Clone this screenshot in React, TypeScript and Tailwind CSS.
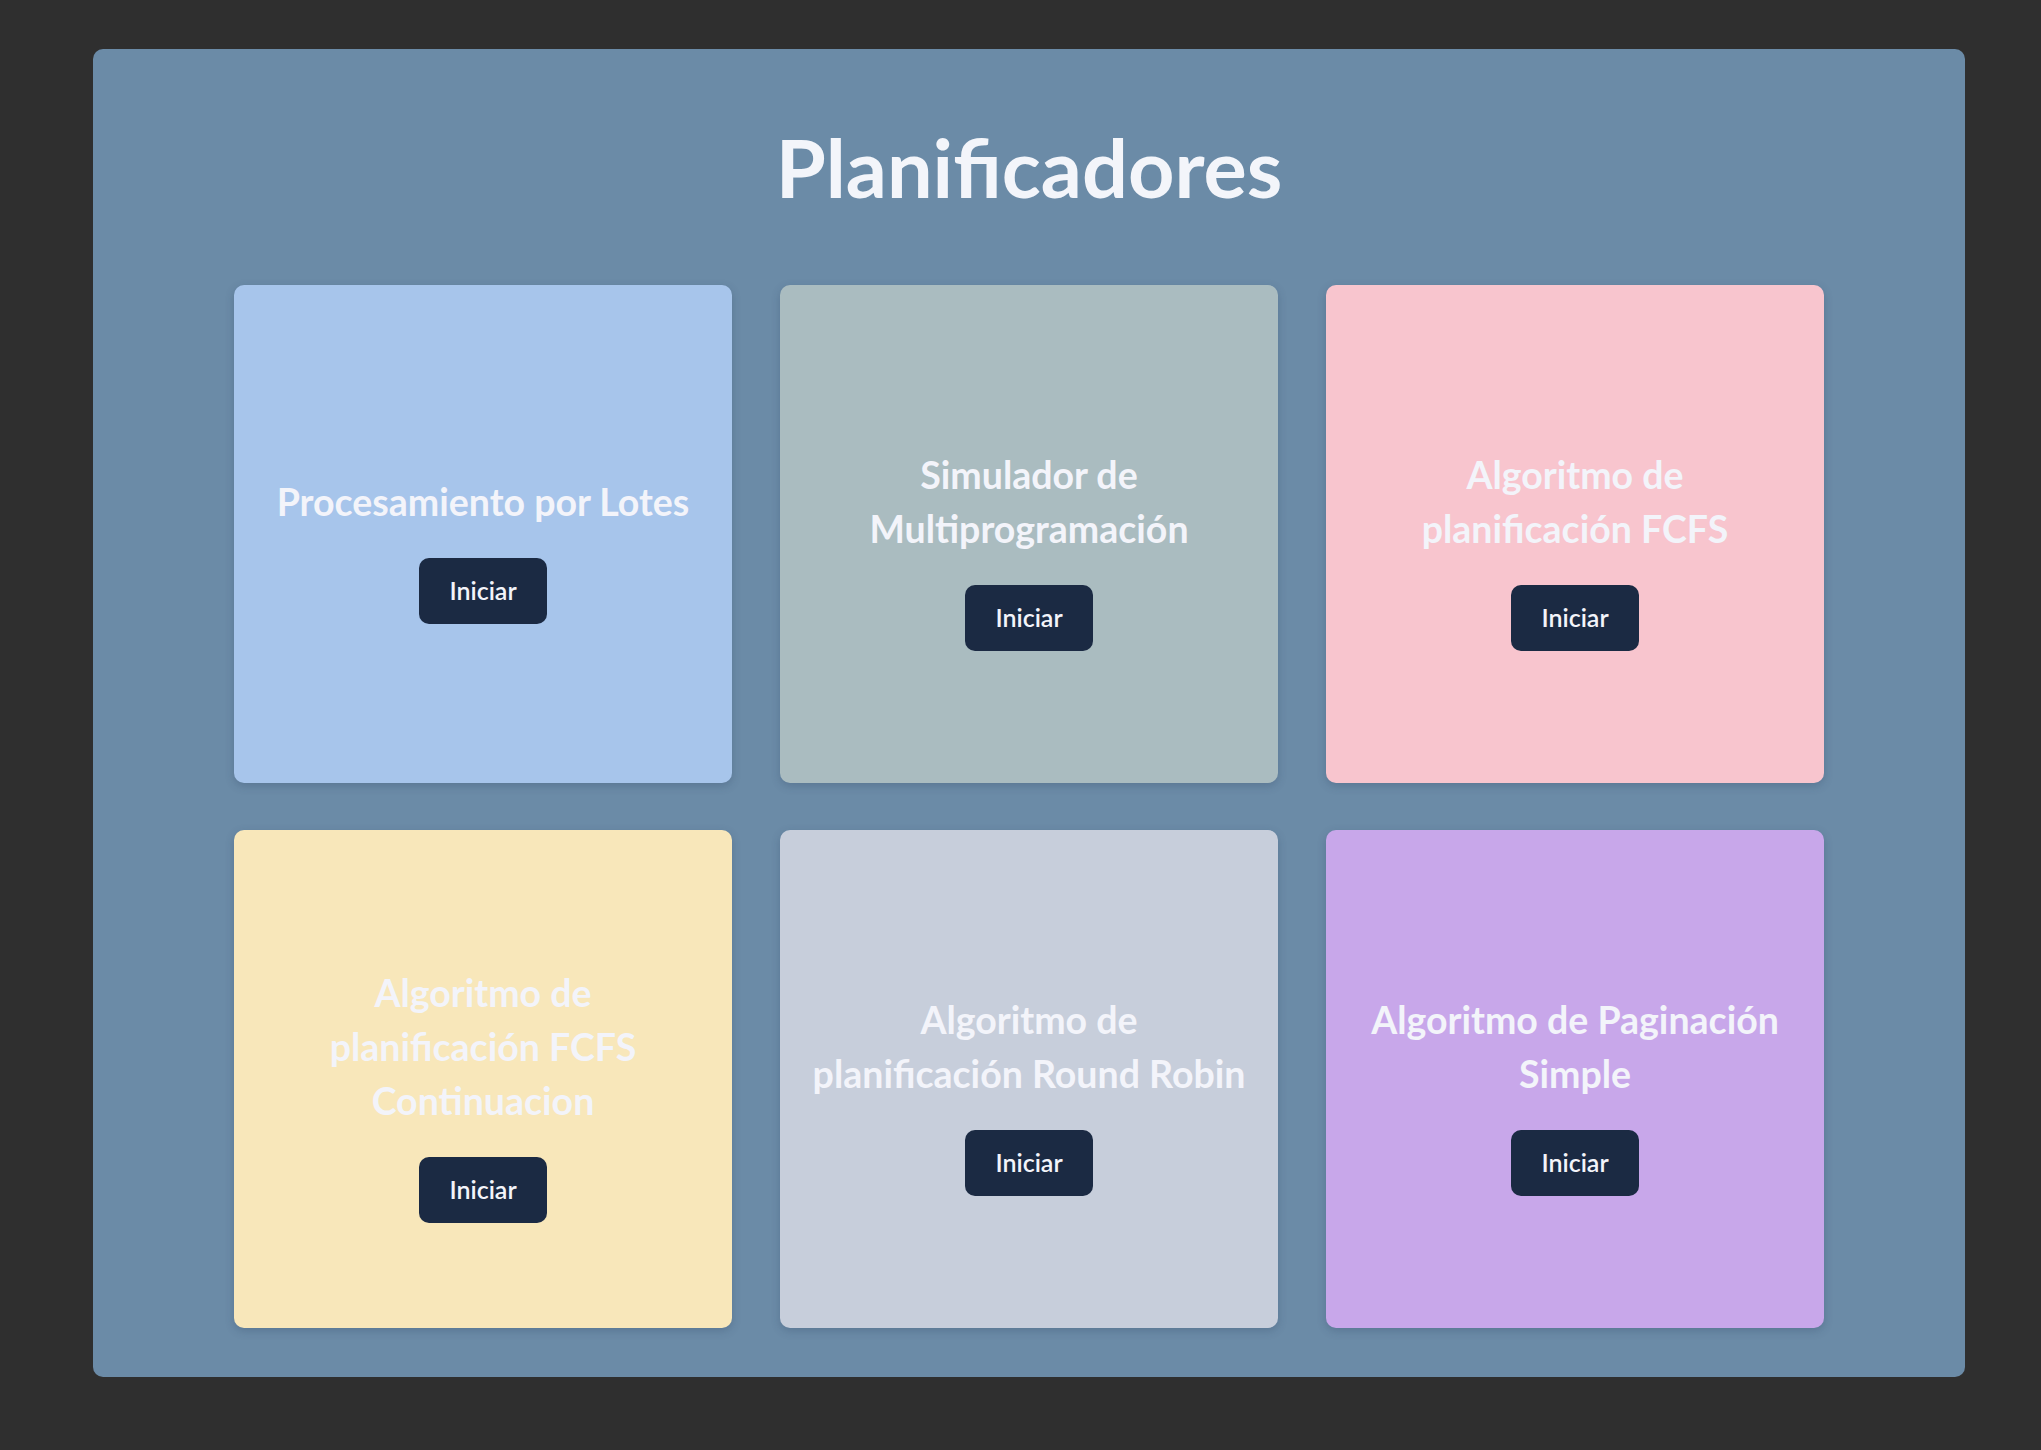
import React from 'react';

type Planner = {
  id: number;
  lines: string[];
  bg: string;
};

const PLANNERS: Planner[] = [
  { id: 1, lines: ['Procesamiento por Lotes'], bg: 'bg-[#a7c5eb]' },
  { id: 2, lines: ['Simulador de', 'Multiprogramación'], bg: 'bg-[#aabcc0]' },
  { id: 3, lines: ['Algoritmo de', 'planificación FCFS'], bg: 'bg-[#f8c5ce]' },
  { id: 4, lines: ['Algoritmo de', 'planificación FCFS', 'Continuacion'], bg: 'bg-[#f8e7ba]' },
  { id: 5, lines: ['Algoritmo de', 'planificación Round Robin'], bg: 'bg-[#c7cedb]' },
  { id: 6, lines: ['Algoritmo de Paginación', 'Simple'], bg: 'bg-[#c8a7ea]' },
];

const PlannerCard: React.FC<{ planner: Planner }> = ({ planner }) => {
  return (
    <div
      className={`${planner.bg} h-[498px] rounded-[10px] shadow-[0_3px_8px_rgba(40,60,90,0.25)] flex flex-col items-center justify-center pt-[30px] px-4 text-center`}
    >
      <h2 className="text-[37.5px] leading-[54px] font-bold text-[#f3f4fa]">
        {planner.lines.map((line) => (
          <span key={line} className="block whitespace-nowrap">
            {line}
          </span>
        ))}
      </h2>
      <button className="mt-[29px] h-[66px] px-[30px] rounded-[10px] bg-[#1b2a43] text-[25px] leading-none font-semibold text-[#f3f4fa]">
        Iniciar
      </button>
    </div>
  );
};

export default function App() {
  return (
    <div className="min-h-screen bg-[#2f2f2f] pt-[49px] pl-[93px] font-['Lato',sans-serif]">
      <div className="w-[1872px] h-[1328px] rounded-[10px] bg-[#6b8ba7] pt-[68px]">
        <h1 className="text-center text-[81px] leading-[100px] font-bold text-[#f3f5fa]">
          Planificadores
        </h1>
        <div className="w-[1590px] mx-auto mt-[68px] grid grid-cols-3 gap-x-[48px] gap-y-[47px]">
          {PLANNERS.map((planner) => (
            <PlannerCard key={planner.id} planner={planner} />
          ))}
        </div>
      </div>
    </div>
  );
}
